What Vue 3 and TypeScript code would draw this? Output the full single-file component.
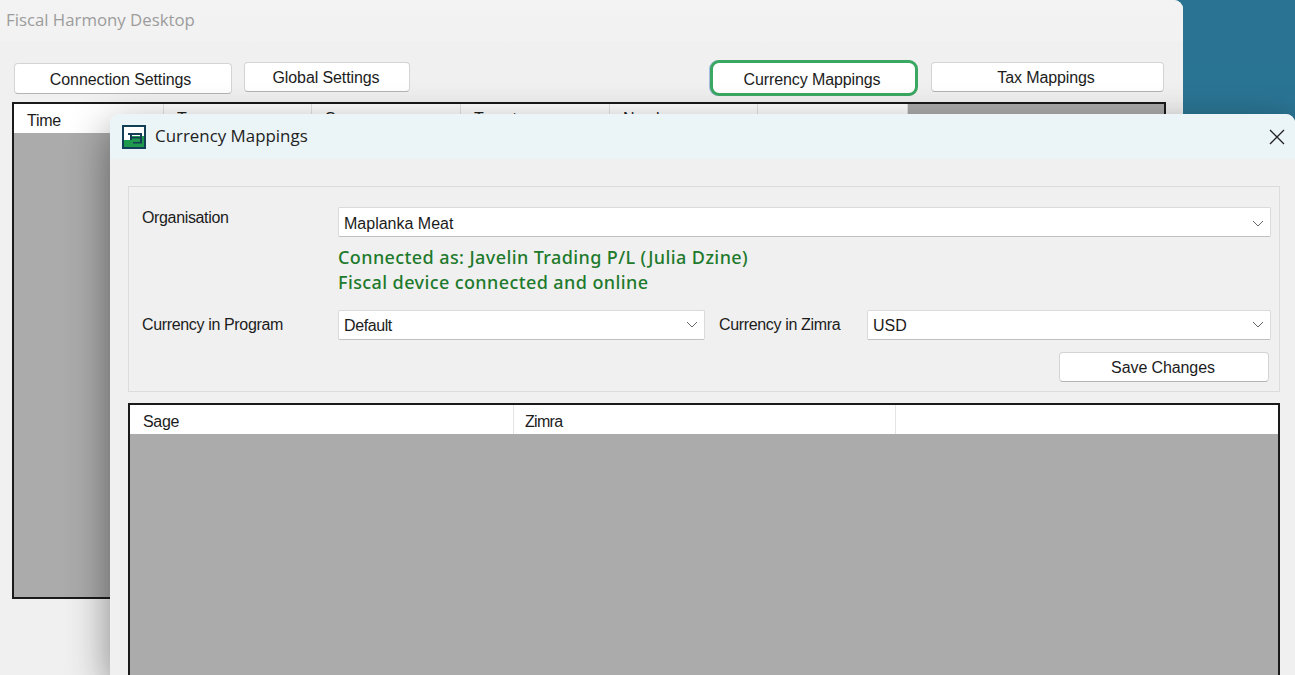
<script setup lang="ts">
const mainCols = [
  { label: 'Time', width: 150 },
  { label: 'Type', width: 148 },
  { label: 'Source', width: 149 },
  { label: 'Target', width: 149 },
  { label: 'Number', width: 148 },
  { label: '', width: 150 },
]
const mapCols = [
  { label: 'Sage', width: 384 },
  { label: 'Zimra', width: 382 },
  { label: '', width: 383 },
]
</script>

<template>
  <div class="desktop">
    <section class="main-window">
      <header class="main-title">Fiscal Harmony Desktop</header>
      <div class="toolbar">
        <button class="btn btn-conn">Connection Settings</button>
        <button class="btn btn-global">Global Settings</button>
        <button class="btn btn-currency">Currency Mappings</button>
        <button class="btn btn-tax">Tax Mappings</button>
      </div>
      <div class="grid main-grid">
        <div class="grid-head">
          <div v-for="c in mainCols" :key="c.label" class="head-cell" :style="{ width: c.width + 'px' }">{{ c.label }}</div>
        </div>
      </div>
    </section>

    <section class="dialog">
      <header class="dialog-title">
        <svg class="app-icon" width="24" height="24" viewBox="0 0 24 24">
          <rect width="24" height="24" fill="#123f55" />
          <rect x="2" y="2" width="20" height="9" fill="#ffffff" />
          <rect x="2" y="11" width="7" height="4" fill="#ffffff" />
          <rect x="2" y="15" width="20" height="7" fill="#1f9a4d" />
          <rect x="9" y="11" width="13" height="4" fill="#1f9a4d" />
          <path d="M6 8h14v2H10v5H8v-5H6z" fill="#123f55" />
          <path d="M10 12h8v1.5h-8z" fill="#123f55" />
          <path d="M18 9h2v9.5h-9V17h7z" fill="#123f55" />
        </svg>
        <span class="dialog-name">Currency Mappings</span>
        <svg class="close" width="16" height="16" viewBox="0 0 16 16">
          <path d="M1 1l14 14M15 1L1 15" stroke="#222" stroke-width="1.3" fill="none" />
        </svg>
      </header>
      <div class="dialog-body">
        <div class="group">
          <div class="row row-org">
            <label class="label label-first">Organisation</label>
            <div class="combo combo-org"><span>Maplanka Meat</span><svg class="chev" width="12" height="7" viewBox="0 0 12 7"><path d="M1 1l5 5 5-5" stroke="#666" fill="none" /></svg></div>
          </div>
          <div class="status">
            <div>Connected as: Javelin Trading P/L (Julia Dzine)</div>
            <div>Fiscal device connected and online</div>
          </div>
          <div class="row row-currency">
            <label class="label label-first">Currency in Program</label>
            <div class="combo combo-program"><span>Default</span><svg class="chev" width="12" height="7" viewBox="0 0 12 7"><path d="M1 1l5 5 5-5" stroke="#666" fill="none" /></svg></div>
            <label class="label label-zimra">Currency in Zimra</label>
            <div class="combo combo-zimra"><span>USD</span><svg class="chev" width="12" height="7" viewBox="0 0 12 7"><path d="M1 1l5 5 5-5" stroke="#666" fill="none" /></svg></div>
          </div>
          <div class="row-save"><button class="btn btn-save">Save Changes</button></div>
        </div>
        <div class="grid map-grid">
          <div class="grid-head">
            <div v-for="c in mapCols" :key="c.label" class="head-cell" :style="{ width: c.width + 'px' }">{{ c.label }}</div>
          </div>
        </div>
      </div>
    </section>
  </div>
</template>

<style>
html, body { margin: 0; overflow: hidden; }
</style>

<style scoped>
.desktop {
  position: relative;
  width: 1295px;
  height: 675px;
  overflow: hidden;
  background: linear-gradient(180deg, #2a7392 0%, #2d7d9d 100%);
  font-family: "Liberation Sans", Arial, sans-serif;
  font-size: 16px;
  color: #1c1c1c;
}
.main-window {
  position: absolute;
  left: 0;
  top: 0;
  width: 1183px;
  height: 675px;
  background: #f0f0f0;
  border-top-right-radius: 9px;
}
.main-title {
  height: 42px;
  padding-left: 6px;
  line-height: 40px;
  font-family: "Open Sans", sans-serif;
  font-size: 16.8px;
  color: #9c9c9c;
  background: linear-gradient(180deg, #f3f3f3, #f2f2f2);
  border-top-right-radius: 9px;
}
.toolbar {
  position: relative;
  height: 61px;
  display: flex;
  align-items: flex-start;
}
.btn {
  box-sizing: border-box;
  font: inherit;
  font-size: 16px;
  letter-spacing: -0.1px;
  color: #1c1c1c;
  background: #ffffff;
  border: 1px solid #d4d4d4;
  border-bottom-color: #b4b4b4;
  border-radius: 4px;
  padding: 2px 0 0;
  flex: none;
}
.btn-conn { margin: 21px 0 0 14px; width: 218px; height: 31px; padding-right: 5px; }
.btn-global { margin: 20px 0 0 12px; width: 166px; height: 30px; padding-right: 2px; }
.btn-currency {
  margin: 18px 0 0 300px;
  width: 208px;
  height: 36px;
  padding: 3px 4px 0 0;
  border: 3px solid #3aa862;
  border-radius: 9px;
  box-shadow: -1px 0 0 rgba(70, 120, 200, 0.45);
}
.btn-tax { margin: 20px 0 0 13px; width: 233px; height: 30px; padding-right: 3px; }
.grid {
  box-sizing: border-box;
  border: 2px solid #1a1a1a;
  background: #ababab;
  overflow: hidden;
}
.main-grid {
  margin-top: -1px;
  margin-left: 12px;
  width: 1154px;
  height: 497px;
}
.grid-head {
  display: flex;
}
.head-cell {
  box-sizing: border-box;
  flex: none;
  height: 29px;
  line-height: 33px;
  padding-left: 13px;
  background: #ffffff;
  border-right: 1px solid #e4e4e4;
  letter-spacing: -0.3px;
}
.main-grid .head-cell:not(:first-child) {
  line-height: 29px;
}
.map-grid .head-cell:nth-child(2) {
  padding-left: 11px;
  letter-spacing: -0.7px;
}
.dialog {
  position: absolute;
  left: 110px;
  top: 114px;
  width: 1185px;
  height: 561px;
  background: #f0f0f0;
  border-top-left-radius: 9px;
  border-top-right-radius: 9px;
  box-shadow: 0 14px 42px rgba(0, 0, 0, 0.45);
}
.dialog-title {
  height: 45px;
  display: flex;
  align-items: center;
  padding-left: 12px;
  background: #ebf5f8;
  border-top-left-radius: 9px;
  border-top-right-radius: 9px;
}
.app-icon { flex: none; }
.dialog-name {
  margin-left: 9px;
  margin-bottom: 2px;
  font-family: "Open Sans", sans-serif;
  font-size: 16.9px;
  color: #222;
}
.close { margin-left: auto; margin-right: 10px; }
.dialog-body {
  padding: 27px 15px 0 18px;
}
.group {
  box-sizing: border-box;
  height: 206px;
  border: 1px solid #dcdcdc;
  padding: 20px 8px 0 13px;
}
.row { display: flex; align-items: center; }
.label { flex: none; letter-spacing: -0.35px; }
.label-first { width: 196px; }
.row-org { height: 30px; align-items: flex-start; }
.row-org .label { padding-top: 2px; }
.row-currency { margin-top: 14px; height: 31px; }
.label-zimra { width: 148px; margin-left: 14px; }
.combo {
  box-sizing: border-box;
  height: 30px;
  display: flex;
  align-items: center;
  justify-content: space-between;
  padding: 2px 6px 0 5px;
  background: #ffffff;
  border: 1px solid #dadada;
  border-bottom-color: #c0c0c0;
  border-radius: 2px;
}
.combo-org { width: 933px; padding-top: 4px; }
.combo-program { width: 367px; letter-spacing: -0.4px; }
.combo-zimra { width: 404px; }
.chev { flex: none; margin-top: -2px; }
.status {
  margin: 8px 0 0 196px;
  font-family: "Noto Sans", sans-serif;
  font-weight: 500;
  font-size: 18px;
  letter-spacing: 0.4px;
  line-height: 25px;
  color: #1e7a2c;
}
.row-save {
  display: flex;
  justify-content: flex-end;
  margin-top: 12px;
  padding-right: 2px;
}
.btn-save { width: 210px; height: 30px; padding-right: 2px; }
.map-grid {
  margin-top: 11px;
  height: 400px;
  width: 1152px;
}
</style>
